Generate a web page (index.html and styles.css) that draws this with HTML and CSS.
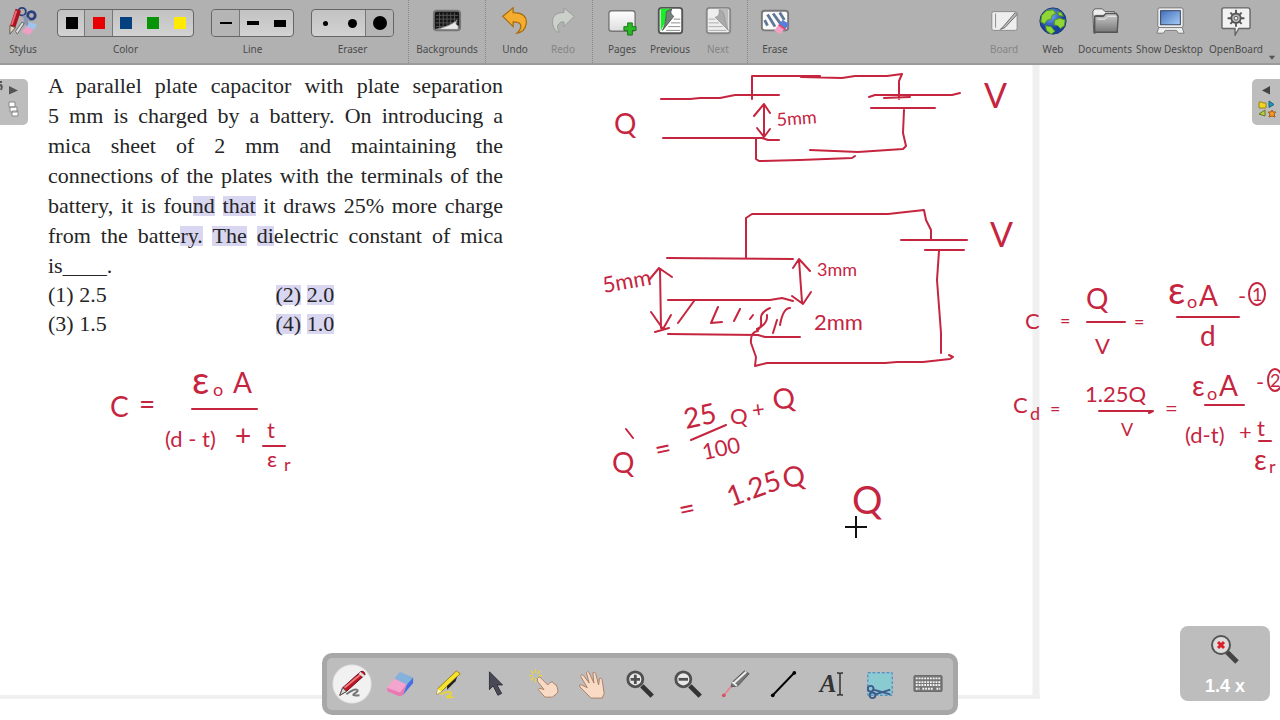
FILE: index.html
```html
<!DOCTYPE html>
<html lang="en">
<head>
<meta charset="utf-8">
<title>OpenBoard</title>
<link rel="stylesheet" href="styles.css">
</head>
<body>
<header class="topbar">
  <button class="tool tool-stylus"><svg viewBox="0 0 32 32"><g fill="none"><circle cx="15" cy="6" r="4" stroke="#2c3f7c" stroke-width="2"/><circle cx="25" cy="10" r="4" stroke="#2c3f7c" stroke-width="3"/><path d="M17 10L22 24M22 13L11 25" stroke="#8995b3" stroke-width="3"/><path d="M11 4L5 22" stroke="#aa1420" stroke-width="6"/><path d="M9 5L4 20" stroke="#ed6870" stroke-width="2"/></g><path d="M2 21l6 2-6 7z" fill="#ead2b3" stroke="#555"/><path d="M20 21l8 3-5 7-8-3z" fill="#ee9fc3"/><path d="M23 17l8 3-3 5-8-3z" fill="#9dc4ec"/><path d="M8 27l7-10 2 2-7 11z" fill="#ddd" stroke="#666"/></svg><span>Stylus</span></button>
  <div class="choice"><div class="segments">
    <button class="segment" aria-label="Black"><i class="swatch black"></i></button><button class="segment selected" aria-label="Red"><i class="swatch red"></i></button><button class="segment" aria-label="Blue"><i class="swatch blue"></i></button><button class="segment" aria-label="Green"><i class="swatch green"></i></button><button class="segment" aria-label="Yellow"><i class="swatch yellow"></i></button>
  </div><span>Color</span></div>
  <div class="choice"><div class="segments">
    <button class="segment selected" aria-label="Fine line"><i class="line fine"></i></button><button class="segment" aria-label="Medium line"><i class="line medium"></i></button><button class="segment" aria-label="Strong line"><i class="line strong"></i></button>
  </div><span>Line</span></div>
  <div class="choice"><div class="segments">
    <button class="segment" aria-label="Small eraser"><i class="dot small"></i></button><button class="segment" aria-label="Medium eraser"><i class="dot middle"></i></button><button class="segment selected" aria-label="Large eraser"><i class="dot large"></i></button>
  </div><span>Eraser</span></div>
  <div class="group first">
    <button class="tool wide"><svg viewBox="0 0 32 32"><rect x="2" y="5" width="28" height="21" rx="3" fill="#151515" stroke="#777" stroke-width="2"/><path d="M4 10h24M4 14h24M4 18h24M4 22h24M8 7v18M12 7v18M16 7v18M20 7v18M24 7v18" stroke="#555"/><path d="M4 25c9-2 17-5 23-10-2 3-2 5 1 6v4z" fill="#e8e8e8" stroke="#888"/></svg><span>Backgrounds</span></button>
  </div>
  <div class="group">
    <button class="tool"><svg viewBox="0 0 32 32"><path d="M3 11L14 2v5c11 0 15 5 14 12-1 6-5 9-10 10 4-4 5-6 4-9-1-2-3-3-8-3v5z" fill="#f5ad2f" stroke="#a66c10" stroke-width="1.3"/></svg><span>Undo</span></button>
    <button class="tool disabled"><svg viewBox="0 0 32 32"><path d="M28 11L17 2v5C7 7 4 12 5 19c1 6 4 9 7 9-2-4-3-7 0-9 1-2 2-2 5-2v5z" fill="#cbd0cb" stroke="#949994"/></svg><span>Redo</span></button>
  </div>
  <div class="group">
    <button class="tool"><svg viewBox="0 0 32 32"><defs><linearGradient id="paper" x2="0" y2="1"><stop stop-color="#fff"/><stop offset="1" stop-color="#ddd"/></linearGradient></defs><rect x="2" y="5" width="28" height="22" rx="3" fill="url(#paper)" stroke="#777" stroke-width="1.5"/><path d="M22 18h5v4h4v4h-4v5h-5v-5h-4v-4h4z" fill="#2bba25" stroke="#147316"/></svg><span>Pages</span></button>
    <button class="tool"><svg viewBox="0 0 32 32"><rect x="4" y="2" width="25" height="27" rx="3" fill="#fff" stroke="#555" stroke-width="2"/><path d="M6 3h12L6 27z" fill="#18ef28"/><path d="M18 3c-2 4-1 6 2 8L8 26C12 18 12 8 12 6z" fill="#72827b" stroke="#555"/><path d="M20 14h7M17 18h10M14 22h13M12 26h15" stroke="#888"/></svg><span>Previous</span></button>
    <button class="tool disabled"><svg viewBox="0 0 32 32"><rect x="4" y="2" width="25" height="27" rx="3" fill="#eee" stroke="#888" stroke-width="2"/><path d="M17 3h10v24z" fill="#bbb"/><path d="M17 4c1 4 0 7-4 8l14 14C23 18 23 9 21 6z" fill="#aaa" stroke="#999"/><path d="M6 14h7M6 18h11M6 22h15M6 26h19" stroke="#aaa"/></svg><span>Next</span></button>
  </div>
  <div class="group last">
    <button class="tool"><svg viewBox="0 0 32 32"><rect x="2" y="5" width="28" height="21" rx="3" fill="#fafafa" stroke="#777" stroke-width="2"/><path d="M5 15l3 6M8 9l8 13M14 8l8 11M21 7l5 8" stroke="#607795" stroke-width="3"/><path d="M20 20l6 4-4 6-7-4z" fill="#f4a1c8"/><path d="M24 15l7 4-4 6-7-5z" fill="#587edc"/><path d="M20 20l7 5" stroke="#e64b68" stroke-width="2"/></svg><span>Erase</span></button>
  </div>
  <nav class="modes">
    <button class="tool disabled"><svg viewBox="0 0 32 32"><rect x="3" y="6" width="27" height="20" rx="2" fill="#eee" stroke="#888"/><path d="M7 8v15" stroke="#888"/><path d="M28 7L16 21l-4 4 5-2L30 9z" fill="#bbb" stroke="#666"/></svg><span>Board</span></button>
    <button class="tool web"><svg viewBox="0 0 32 32"><defs><radialGradient id="globe" cx=".4" cy=".3"><stop stop-color="#76b2f6"/><stop offset="1" stop-color="#173f9d"/></radialGradient></defs><circle cx="16" cy="16" r="14" fill="url(#globe)" stroke="#1c3970"/><path d="M4 10l5-5 7-1 3 4-4 2-1 4-4 1-3 4-4-2zM18 15l5-2 6 2-1 6-4 3-3-3-4-1zM8 21l6 1 4 5-4 3-5-4zM21 6l4 1 2 4-5-1z" fill="#91d637" stroke="#528f23"/></svg><span>Web</span></button>
    <button class="tool documents"><svg viewBox="0 0 32 32"><defs><linearGradient id="folder" x2="0" y2="1"><stop stop-color="#ccc"/><stop offset="1" stop-color="#777"/></linearGradient></defs><path d="M3 6l2-3h8l3 3h10v4H6v19H4z" fill="#eee" stroke="#555"/><path d="M5 28V11h9l3-3h11l2 3-1 17z" fill="url(#folder)" stroke="#555" stroke-width="1.5"/><path d="M8 14h8l3-3h9" stroke="#eee" fill="none"/></svg><span>Documents</span></button>
    <button class="tool desktop"><svg viewBox="0 0 32 32"><defs><linearGradient id="screen" x2="1" y2="1"><stop stop-color="#426ebd"/><stop offset="1" stop-color="#a7cdf5"/></linearGradient></defs><rect x="3" y="2" width="27" height="21" rx="2" fill="#eee" stroke="#777"/><rect x="6" y="5" width="21" height="15" fill="url(#screen)" stroke="#303d55"/><path d="M4 23h25l2 6h-6l-2-3H11l-2 3H2z" fill="#eee" stroke="#777"/></svg><span>Show Desktop</span></button>
    <button class="tool openboard"><svg viewBox="0 0 32 32"><path d="M3 2h26q2 0 2 3v17q0 2-2 2H19l-4 7v-7H3q-2 0-2-2V4q0-2 2-2z" fill="#f2f2f2" stroke="#666" stroke-width="1.5"/><circle cx="16" cy="13" r="5" fill="#bbb" stroke="#555" stroke-width="2"/><circle cx="16" cy="13" r="2" fill="#eee" stroke="#555"/><path d="M16 4v4M16 18v4M7 13h4M21 13h4M10 7l3 3M19 16l3 3M10 19l3-3M19 10l3-3" stroke="#555" stroke-width="2"/></svg><span>OpenBoard</span></button>
    <button class="more" aria-label="More"><svg viewBox="0 0 10 6"><path d="M1 1h8L5 6z" fill="#555"/></svg></button>
  </nav>
</header>
<main class="board">
  <section class="question">
    <p class="prompt">
      <span>A parallel plate capacitor with plate separation</span>
      <span>5 mm is charged by a battery. On introducing a</span>
      <span>mica sheet of 2 mm and maintaining the</span>
      <span>connections of the plates with the terminals of the</span>
      <span>battery, it is fou<mark>nd</mark> <mark>that</mark> it draws 25% more charge</span>
      <span>from the batte<mark>ry.</mark> <mark>The</mark> <mark>di</mark>electric constant of mica</span>
      <span class="short">is____.</span>
    </p>
    <div class="options"><span>(1) 2.5</span><span><mark>(2)</mark> <mark>2.0</mark></span><span>(3) 1.5</span><span><mark>(4)</mark> <mark>1.0</mark></span></div>
  </section>
  <svg class="ink" viewBox="0 65 1280 655" preserveAspectRatio="xMinYMin meet">
    <g class="page-edge"><path class="vertical" d="M1036 65V696"/><path class="horizontal" d="M0 697H1040"/></g>
    <g class="stroke">
      <path d="M661 99l29 0 10-1h20l15-3h44M752 99V76h68M801 77l41 1 13-2h32l15-2-3 7v18M869 97l6-2h77l8-2M884 98l26-1M871 108h64M904 110l-1 23 3 13-3 3-45 3-48-2M663 138h99l6 2h11M756 139v20l3 2 41-1 52-2 3-2M764 105v31M754 116l10-12 6 9M757 128l7 9 6-8"/>
      <path d="M667 258l126 1M746 258v-40l6-4h136l36-4 2 10 5 10v10M901 240h66M925 250h39M939 251l-2 29 4 53v20M668 300h102l12-2 11 3M668 334l90 1 7 2h35M758 331q-8 1-7 12l5 14-1 9 12-3h118l12-1h26l27-3 3-2-4-2"/>
      <path d="M694 301l-16 22M718 307l-7 16 11-1M740 309l-6 12M753 315l-3 4M770 308q-10 4-9 12t-4 10M767 315q1 9-10 14M777 320l-4 13M790 308q-7 0-10 17M660 269l1 59M649 280l10-12 13 9M651 312l12 17 8-14M655 332l14-4M799 260l3 42M793 268l6-9 11 12M792 296l11 8 8-12"/>
      <path d="M192 409h65M263 446h22M691 440l35-15M1087 322h38M1177 317h62M1099 411h54l-4 2M1205 405h39M1259 441h12M626 429l7 9"/>
      <ellipse cx="1257" cy="294" rx="8" ry="11"/><ellipse cx="1275" cy="380" rx="7" ry="11"/>
    </g>
    <g class="hand">
      <text class="s28" x="614" y="134">Q</text>
      <text class="s20" transform="translate(777 126) rotate(-4)">5mm</text>
      <text class="s32" x="984" y="108">V</text><text class="s32" x="990" y="247">V</text>
      <text class="s24" transform="translate(604 293) rotate(-10)">5mm</text>
      <text class="s20" x="817" y="276">3mm</text><text class="s24" x="814" y="330">2mm</text>
      <text class="s28" x="110" y="417">C</text><text class="s28" x="139" y="414">=</text>
      <text class="s36" x="192" y="394">ε</text><text class="s20" x="213" y="396">o</text><text class="s28" x="233" y="393">A</text>
      <text class="s24" x="165" y="447">(d - t)</text><text class="s28" x="235" y="446">+</text><text class="s24" x="267" y="438">t</text><text class="s24" x="267" y="467">ε</text><text class="s20" x="284" y="471">r</text>
      <text class="s28" x="612" y="473">Q</text><text class="s28" transform="translate(657 460) rotate(-12)">=</text>
      <text class="s28" transform="translate(686 429) rotate(-12)">25</text><text class="s24" transform="translate(704 460) rotate(-12)">100</text><text class="s24" x="730" y="424">Q</text><text class="s24" transform="translate(753 418) rotate(-8)">+</text><text class="s28" transform="translate(774 410) rotate(-8)">Q</text>
      <text class="s28" transform="translate(681 520) rotate(-12)">=</text><text class="s28" transform="translate(731 507) rotate(-20)">1.25</text><text class="s28" transform="translate(784 488) rotate(-8)">Q</text>
      <text class="s36" x="852" y="514">Q</text>
      <text class="s24" x="1025" y="329">C</text><text class="s20" x="1060" y="327">=</text><text class="s28" x="1086" y="309">Q</text><text class="s24" x="1095" y="354">V</text><text class="s20" x="1134" y="328">=</text>
      <text class="s36" x="1168" y="304">ε</text><text class="s20" x="1187" y="308">o</text><text class="s28" x="1199" y="306">A</text><text class="s24" x="1238" y="304">-</text><text class="s20" x="1252" y="301">1</text><text class="s28" x="1200" y="346">d</text>
      <text class="s24" x="1013" y="413">C</text><text class="s20" x="1030" y="420">d</text><text class="s20" x="1050" y="415">=</text><text class="s24" x="1085" y="402">1.25Q</text><text class="s20" x="1121" y="436">V</text><text class="s24" x="1165" y="416">=</text>
      <text class="s28" x="1192" y="396">ε</text><text class="s20" x="1207" y="400">o</text><text class="s28" x="1219" y="396">A</text><text class="s24" x="1256" y="390">-</text><text class="s20" x="1270" y="387">2</text><text class="s24" x="1185" y="443">(d-t)</text><text class="s24" x="1239" y="440">+</text><text class="s24" x="1257" y="436">t</text><text class="s28" x="1254" y="470">ε</text><text class="s20" x="1269" y="473">r</text>
    </g>
    <path class="cursor" d="M856 516v22M845 527h22"/>
  </svg>
  <button class="tab tab-left" aria-label="Pages palette"><svg viewBox="0 0 28 46"><path d="M0 3l2 0M0 6q3 0 1 5" stroke="#555" stroke-width="2" fill="none"/><path d="M9 7l9 4.500-9 4z" fill="#555"/><path d="M9 23h6v5H9zM10 28h7v5h-7zM12 32h6v5h-6z" fill="#fff" stroke="#888"/></svg></button>
  <button class="tab tab-right" aria-label="Library palette"><svg viewBox="0 0 28 46"><path d="M18 7l-8 4.500 8 4z" fill="#444"/><path d="M7 23h3l1 1h3v5H7z" fill="#f1d323" stroke="#98841a"/><path d="M17 22l5 3.500-5 3z" fill="#1c9abb" stroke="#19647a"/><path d="M13 31v6l-6-2z" fill="#b7d338" stroke="#687628"/><path d="M20 31l1 2 3 0-2 2 1 3-3-1-3 1 1-3-2-2 3 0z" fill="#f49828" stroke="#a65c18"/></svg></button>
  <button class="zoom"><svg viewBox="0 0 32 32"><path d="M18 18l10 10" stroke="#444" stroke-width="5"/><circle cx="12" cy="11" r="9" fill="#ddd" stroke="#555" stroke-width="2"/><path d="M9 8l6 6M15 8l-6 6" stroke="#dc202b" stroke-width="3"/></svg><span>1.4 x</span></button>
  <nav class="dock" aria-label="Drawing tools">
    <button class="active" aria-label="Pen"><svg viewBox="0 0 32 32"><path d="M10 27q8-6 11-5t-2 4 5 2" fill="none" stroke="#777" stroke-width="2"/><path d="M3 28l3-8L25 3q4-2 5 3L10 24z" fill="#bd1424" stroke="#681019"/><path d="M8 20L26 5" stroke="#f17882" stroke-width="2"/><path d="M3 28l3-8 4 4z" fill="#ddd" stroke="#555"/><path d="M24 4l5 4" stroke="#ddd" stroke-width="3"/></svg></button>
    <button aria-label="Eraser"><svg viewBox="0 0 32 32"><path d="M2 20L16 3l14 6-14 19-13-4z" fill="#f4a5cd"/><path d="M10 10L16 3l14 6-6 8z" fill="#83b3dc"/><path d="M23 17l7-8v6L19 28z" fill="#456fe5"/><path d="M2 20l14 5 7-9-4 12-4 1-12-5z" fill="#e879b4"/></svg></button>
    <button aria-label="Highlighter"><svg viewBox="0 0 32 32"><path d="M8 27q10-4 11-2t-3 4 6 1" fill="none" stroke="#ead632" stroke-width="2"/><path d="M4 27l1-6L25 2l4 3L9 24z" fill="#f8e22b" stroke="#938014"/><path d="M15 18L26 8l-2 5-9 9z" fill="#222"/><path d="M4 27l1-6 4 3z" fill="#fff5b6"/></svg></button>
    <button aria-label="Select"><svg viewBox="0 0 32 32"><path d="M9 3v19l4-4 5 10 4-2-5-9h6z" fill="#494957" stroke="#30303c"/></svg></button>
    <button aria-label="Play"><svg viewBox="0 0 32 32"><path d="M7 0v4M7 10v4M0 7h4M10 7h4M2 2l3 3M9 9l3 3M2 12l3-3M9 5l3-3" stroke="#ead735" stroke-width="1.300"/><path d="M9 10q2-3 5 1l6 6 3-3q3-1 4 2l2 1q3 6 1 9l-5 4h-8l-7-8q0-2 3-1l3 1-7-9z" fill="#f8dac5" stroke="#a87e63"/></svg></button>
    <button aria-label="Hand"><svg viewBox="0 0 32 32"><path d="M3 19q-1-3 2-2l6 3L4 8q0-3 3-1l6 8-3-11q1-3 3 0l5 11-1-11q2-2 3 1l3 12 1-7q3-1 3 3l2 13-2 5H15z" fill="#f8dac5" stroke="#a87e63"/></svg></button>
    <button aria-label="Zoom in"><svg viewBox="0 0 32 32"><path d="M18 18l11 11" stroke="#333" stroke-width="5"/><circle cx="11" cy="11" r="8" fill="#e8e8e8" stroke="#505050" stroke-width="3"/><path d="M11 6v10M6 11h10" stroke="#505050" stroke-width="3"/></svg></button>
    <button aria-label="Zoom out"><svg viewBox="0 0 32 32"><path d="M18 18l11 11" stroke="#333" stroke-width="5"/><circle cx="11" cy="11" r="8" fill="#e8e8e8" stroke="#505050" stroke-width="3"/><path d="M6 11h10" stroke="#505050" stroke-width="3"/></svg></button>
    <button aria-label="Laser pointer"><svg viewBox="0 0 32 32"><path d="M3 28l10-12" stroke="#e5848e" stroke-width="2"/><circle cx="3" cy="28" r="2" fill="#d65362"/><path d="M12 14L25 2l5 3-12 13-7 1z" fill="#777" stroke="#555"/><path d="M12 14l5 4M14 15L27 3" stroke="#eee" stroke-width="2"/></svg></button>
    <button aria-label="Line"><svg viewBox="0 0 32 32"><path d="M4 28L27 4" stroke="#000" stroke-width="2"/><circle cx="4" cy="28" r="2"/><circle cx="27" cy="4" r="2"/></svg></button>
    <button class="text-tool" aria-label="Text"><b>A</b><svg viewBox="0 0 8 26"><path d="M1 2h2l1 1 1-1h2M4 3v20M1 24h2l1-1 1 1h2" fill="none" stroke="#333" stroke-width="1.500"/></svg></button>
    <button aria-label="Capture"><svg viewBox="0 0 32 32"><path d="M3 4h26v24H3z" fill="#8acbd1" stroke="#3679c8" stroke-dasharray="3 2"/><g fill="none" stroke="#3e5a8c" stroke-width="2"><circle cx="6" cy="21" r="3"/><circle cx="8" cy="28" r="3"/><path d="M9 22l18 5M11 27l16-5"/></g></svg></button>
    <button aria-label="Keyboard"><svg viewBox="0 0 32 32"><rect x="1" y="7" width="30" height="17" rx="1" fill="#777" stroke="#666"/><path d="M3 10h26M3 14h26M3 17h26M3 21h4M10 21h12M25 21h4" stroke="#f4f4f4" stroke-width="2" stroke-dasharray="2 1"/></svg></button>
  </nav>
</main>
</body>
</html>
```
FILE: styles.css
```css
* { box-sizing: border-box; }
body { margin: 0; min-height: 100vh; display: flex; flex-direction: column; background: #fff; font-family: "Noto Sans", sans-serif; }
button { border: 0; padding: 0; margin: 0; background: none; color: inherit; font: inherit; }
svg { display: block; }
.topbar { display: flex; height: 65px; padding-left: 6px; background: #b1b1b1; border-bottom: 2px solid #9b9b9b; color: #4b4b4b; font-size: 10px; line-height: 14px; flex: none; }
.tool { display: flex; flex-direction: column; align-items: center; width: 48px; padding-top: 6px; gap: 6px; white-space: nowrap; }
.tool svg { width: 30px; height: 30px; }
.tool-stylus { width: 34px; }
.tool.disabled { color: #858585; }
.tool.wide { width: 76px; }
.choice { display: flex; flex-direction: column; align-items: center; padding-top: 9px; gap: 5px; margin-left: 17px; }
.segments { display: flex; height: 28px; border: 1px solid #666; border-radius: 4px; background: linear-gradient(#c2c2c2, #d2d2d2); overflow: hidden; }
.segment { width: 27px; display: flex; align-items: center; justify-content: center; }
.segment.selected { background: #b5b5b5; box-shadow: 1px 0 #777, -1px 0 #777; }
.swatch { width: 12px; height: 12px; }
.black { background: #000; }
.red { background: #e80000; }
.blue { background: #06417f; }
.green { background: #079407; }
.yellow { background: #ffea00; }
.line { width: 12px; background: #000; }
.fine { height: 2px; }
.medium { height: 4px; }
.strong { height: 7px; }
.dot { border-radius: 50%; background: #000; }
.small { width: 5px; height: 5px; }
.middle { width: 9px; height: 9px; }
.large { width: 14px; height: 14px; }
.group { display: flex; padding: 0 5px; border-left: 1px dotted #888; }
.group.first { padding: 0; margin-left: 14px; }
.group.last { padding-left: 3px; }
.modes { display: flex; margin-left: auto; }
.web { width: 50px; }
.documents { width: 54px; }
.desktop { width: 75px; }
.openboard { width: 58px; }
.more { width: 15px; padding: 52px 3px 0; }
.more svg { width: 8px; }
.board { position: relative; flex: 1; overflow: hidden; }
.question { width: 455px; margin: 6px 0 0 48px; color: #252525; font: 22px/30px "Liberation Serif", serif; }
.prompt { margin: 0 0 -1px; }
.prompt span { display: block; text-align: justify; text-align-last: justify; white-space: nowrap; }
.prompt .short { text-align-last: left; }
.options { display: grid; grid-template-columns: 1fr 1fr; line-height: 29px; }
mark { background: linear-gradient(#d9d6f1, #d9d6f1) 0 3px / 100% 20px no-repeat; color: inherit; }
.ink { position: absolute; top: 0; left: 0; width: 100%; }
.page-edge { fill: none; stroke: #f0f0f0; }
.vertical { stroke-width: 7px; }
.horizontal { stroke-width: 4px; }
.stroke { fill: none; stroke: #c6253f; stroke-width: 2px; stroke-linecap: round; stroke-linejoin: round; }
.hand { fill: #c6253f; font-family: Lato, "Open Sans", sans-serif; }
.s20 { font-size: 18px; }
.s24 { font-size: 22px; }
.s28 { font-size: 28px; }
.s32 { font-size: 34px; }
.s36 { font-size: 38px; }
.cursor { stroke: #111; stroke-width: 2px; }
.tab { position: absolute; top: 14px; width: 28px; height: 46px; background: #bdbdbd; }
.tab-left { left: 0; border-radius: 0 5px 5px 0; }
.tab-right { right: 0; border-radius: 5px 0 0 5px; }
.zoom { position: absolute; right: 10px; bottom: 19px; width: 90px; height: 75px; padding-top: 8px; border-radius: 8px; background: #bdbdbd; color: #fff; font: bold 18px/22px "Liberation Sans", sans-serif; display: flex; flex-direction: column; align-items: center; gap: 9px; }
.zoom svg { width: 32px; height: 32px; }
.dock { position: absolute; bottom: 5px; left: 50%; transform: translateX(-50%); display: flex; height: 62px; padding: 0 1px; border: 5px solid #a7a7a7; border-radius: 10px; background: #bdbdbd; }
.dock button { width: 48px; display: flex; align-items: center; justify-content: center; }
.dock svg { width: 30px; height: 30px; }
.dock .active { background: radial-gradient(circle, #f1f1f1 0 18px, #e3e3e3 19px, transparent 20px); }
.dock .text-tool { color: #333; font: italic bold 25px/30px "Liberation Serif", serif; }
.dock .text-tool svg { width: 8px; height: 26px; }
```
